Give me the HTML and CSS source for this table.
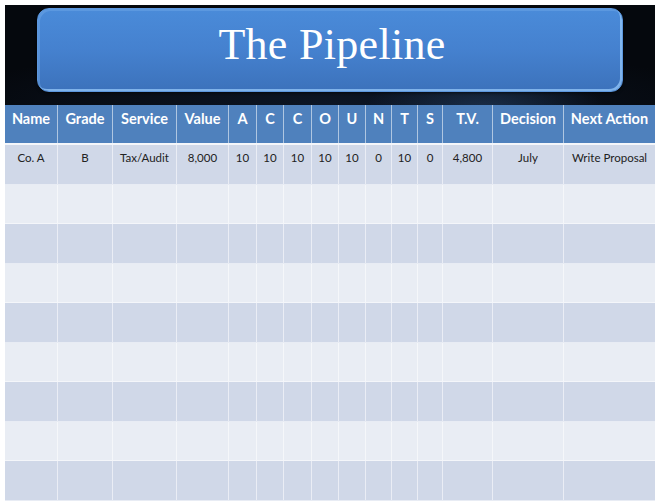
FILE: index.html
```html
<!DOCTYPE html>
<html>
<head>
<meta charset="utf-8">
<link rel="stylesheet" href="styles.css">
</head>
<body>
<div class="page">
  <div class="stage">
    <div class="title-box"><h1 class="title">The Pipeline</h1></div>
  </div>
  <div class="grid head">
    <div class="c">Name</div><div class="c">Grade</div><div class="c">Service</div><div class="c">Value</div>
    <div class="c">A</div><div class="c">C</div><div class="c">C</div><div class="c">O</div><div class="c">U</div>
    <div class="c">N</div><div class="c">T</div><div class="c">S</div><div class="c">T.V.</div>
    <div class="c">Decision</div><div class="c last">Next Action</div>
  </div>
  <div class="body">
    <div class="grid row dark">
      <div class="c">Co. A</div><div class="c">B</div><div class="c">Tax/Audit</div><div class="c">8,000</div>
      <div class="c">10</div><div class="c">10</div><div class="c">10</div><div class="c">10</div><div class="c">10</div>
      <div class="c">0</div><div class="c">10</div><div class="c">0</div><div class="c">4,800</div>
      <div class="c">July</div><div class="c last">Write Proposal</div>
    </div>
    <div class="grid row light"><div class="c"></div><div class="c"></div><div class="c"></div><div class="c"></div><div class="c"></div><div class="c"></div><div class="c"></div><div class="c"></div><div class="c"></div><div class="c"></div><div class="c"></div><div class="c"></div><div class="c"></div><div class="c"></div><div class="c last"></div></div>
    <div class="grid row dark"><div class="c"></div><div class="c"></div><div class="c"></div><div class="c"></div><div class="c"></div><div class="c"></div><div class="c"></div><div class="c"></div><div class="c"></div><div class="c"></div><div class="c"></div><div class="c"></div><div class="c"></div><div class="c"></div><div class="c last"></div></div>
    <div class="grid row light"><div class="c"></div><div class="c"></div><div class="c"></div><div class="c"></div><div class="c"></div><div class="c"></div><div class="c"></div><div class="c"></div><div class="c"></div><div class="c"></div><div class="c"></div><div class="c"></div><div class="c"></div><div class="c"></div><div class="c last"></div></div>
    <div class="grid row dark"><div class="c"></div><div class="c"></div><div class="c"></div><div class="c"></div><div class="c"></div><div class="c"></div><div class="c"></div><div class="c"></div><div class="c"></div><div class="c"></div><div class="c"></div><div class="c"></div><div class="c"></div><div class="c"></div><div class="c last"></div></div>
    <div class="grid row light"><div class="c"></div><div class="c"></div><div class="c"></div><div class="c"></div><div class="c"></div><div class="c"></div><div class="c"></div><div class="c"></div><div class="c"></div><div class="c"></div><div class="c"></div><div class="c"></div><div class="c"></div><div class="c"></div><div class="c last"></div></div>
    <div class="grid row dark"><div class="c"></div><div class="c"></div><div class="c"></div><div class="c"></div><div class="c"></div><div class="c"></div><div class="c"></div><div class="c"></div><div class="c"></div><div class="c"></div><div class="c"></div><div class="c"></div><div class="c"></div><div class="c"></div><div class="c last"></div></div>
    <div class="grid row light"><div class="c"></div><div class="c"></div><div class="c"></div><div class="c"></div><div class="c"></div><div class="c"></div><div class="c"></div><div class="c"></div><div class="c"></div><div class="c"></div><div class="c"></div><div class="c"></div><div class="c"></div><div class="c"></div><div class="c last"></div></div>
    <div class="grid row dark"><div class="c"></div><div class="c"></div><div class="c"></div><div class="c"></div><div class="c"></div><div class="c"></div><div class="c"></div><div class="c"></div><div class="c"></div><div class="c"></div><div class="c"></div><div class="c"></div><div class="c"></div><div class="c"></div><div class="c last"></div></div>
  </div>
</div>
</body>
</html>
```
FILE: styles.css
```css
html, body { margin: 0; padding: 0; background: #ffffff; }
.page {
  width: 650px;
  padding: 5px 4px 2px 5px;
}
.stage {
  height: 100px;
  background:
    radial-gradient(ellipse 120px 40px at 480px 104px, rgba(40,70,110,0.55), rgba(0,0,0,0) 100%),
    radial-gradient(ellipse 400px 60px at 330px 100px, rgba(20,35,60,0.5), rgba(0,0,0,0) 100%),
    #05080d;
  padding: 3px 0 0 32px;
  box-sizing: border-box;
}
.title-box {
  width: 586px;
  height: 84px;
  box-sizing: border-box;
  border-radius: 12px;
  background: linear-gradient(#4a8bd9 0%, #4581cf 50%, #3c72bb 100%);
  border: 1px solid #5d97dd;
  box-shadow: inset -2px -2px 0 rgba(150, 200, 250, 0.75), inset 2px 2px 0 rgba(110, 165, 230, 0.5), 0 1px 3px rgba(0,0,0,0.6);
  display: flex;
  align-items: center;
  justify-content: center;
}
.title {
  margin: 0 0 10px 4px;
  font-family: "Liberation Serif", serif;
  font-weight: normal;
  font-size: 44px;
  line-height: 50px;
  color: #ffffff;
  letter-spacing: 0.3px;
}
.grid {
  display: grid;
  grid-template-columns: 53px 55px 64px 52px 28px 27px 28px 27px 27px 26px 26px 25px 50px 71px 91px;
}
.c {
  border-right: 1px solid rgba(255,255,255,0.55);
  text-align: center;
  white-space: nowrap;
  overflow: hidden;
}
.c.last { border-right: none; }
.head {
  height: 40px;
  background: #4f81bd;
  border-bottom: 2px solid #f4f6fa;
  box-sizing: border-box;
}
.head .c {
  font-family: Lato, "Liberation Sans", sans-serif;
  font-weight: bold;
  font-size: 14.5px;
  line-height: 16px;
  color: #ffffff;
  padding-top: 6px;
}
.body {
  display: grid;
  grid-template-rows: repeat(9, 1fr);
  height: 356px;
}
.row { border-bottom: 1px solid rgba(255,255,255,0.5); box-sizing: border-box; }
.row.dark { background: #d0d8e8; }
.row.light { background: #e9edf4; }
.row .c {
  font-family: Lato, "Liberation Sans", sans-serif;
  font-size: 11.5px;
  line-height: 14px;
  color: #222222;
  padding-top: 6px;
}
```
